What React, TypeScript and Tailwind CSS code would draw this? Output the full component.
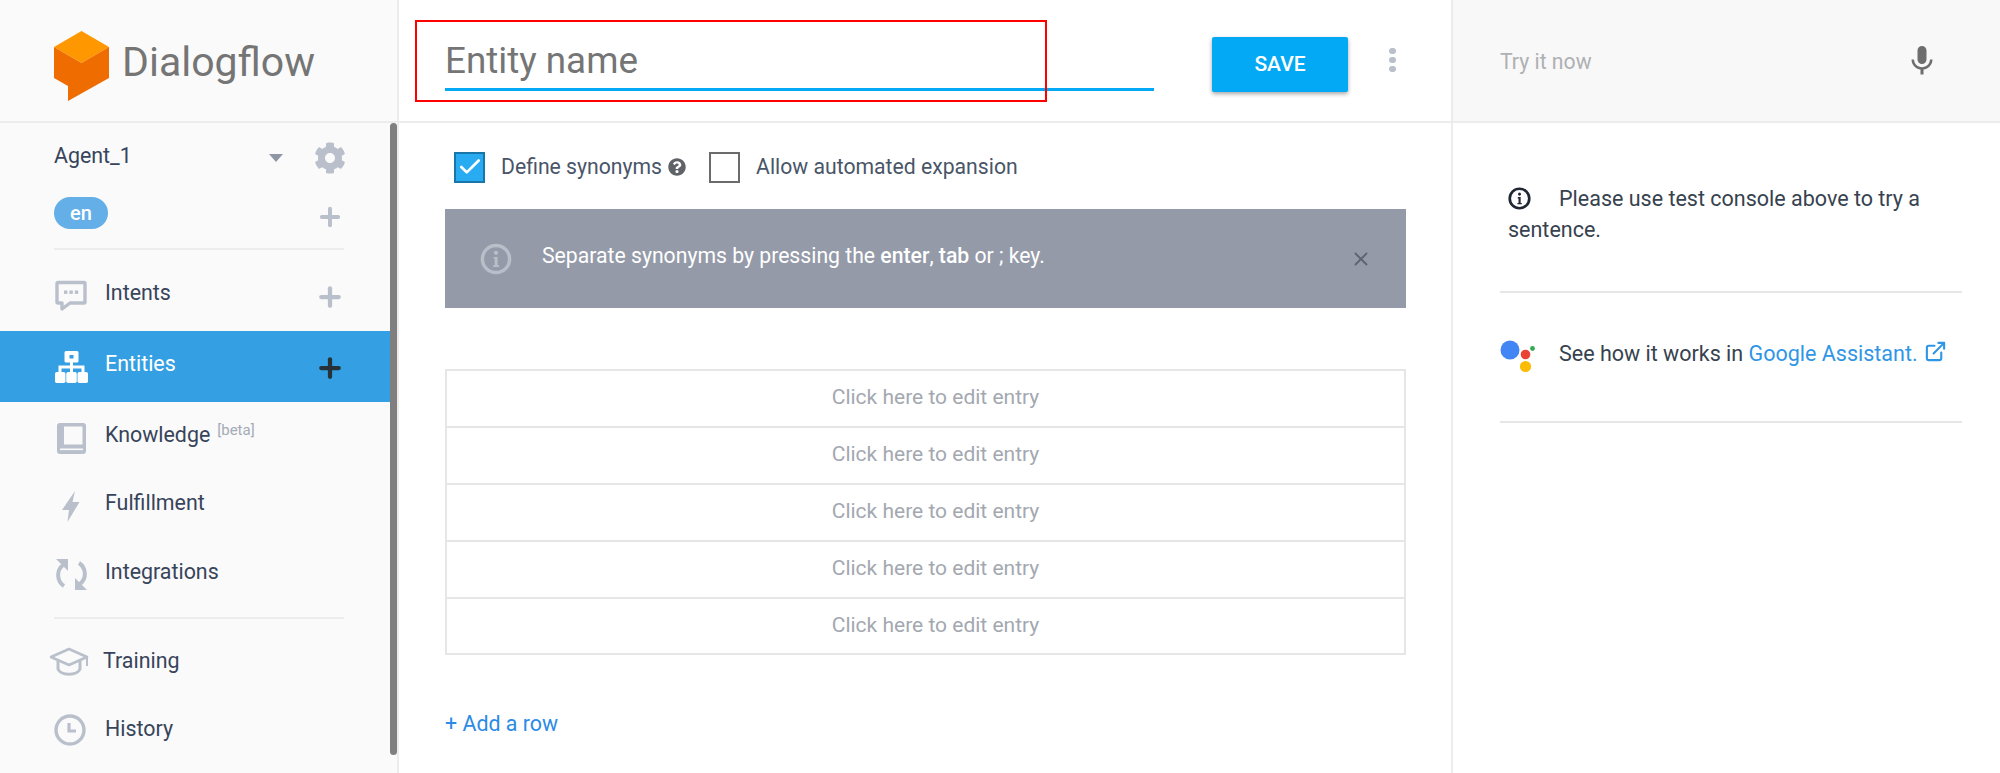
import React from 'react';
import { FaCog, FaQuestionCircle } from 'react-icons/fa';
import { MdMic } from 'react-icons/md';
import { Check, X, Plus, ExternalLink } from 'lucide-react';

const Logo = () => (
  <svg width="55" height="70" viewBox="0 0 55 70" className="shrink-0">
    <path d="M27.5 0 L55 16 L27.5 32 L0 16 Z" fill="#ff9800" />
    <path d="M0 16 L27.5 32 L55 16 V47 L14 70 V55 L0 47 Z" fill="#ef6c00" />
  </svg>
);

const IntentsIcon = () => (
  <svg width="32" height="32" viewBox="0 0 32 32">
    <path d="M3 2.5 H29 a1 1 0 0 1 1 1 V22 a1 1 0 0 1 -1 1 H15 L7 29 V23 H3 a1 1 0 0 1 -1 -1 V3.5 a1 1 0 0 1 1 -1 Z" fill="none" stroke="#b9c0cb" strokeWidth="3.4" strokeLinejoin="round" />
    <rect x="9" y="10.5" width="3.4" height="3.4" fill="#b9c0cb" />
    <rect x="14.4" y="10.5" width="3.4" height="3.4" fill="#b9c0cb" />
    <rect x="19.8" y="10.5" width="3.4" height="3.4" fill="#b9c0cb" />
  </svg>
);

const EntitiesIcon = () => (
  <svg width="33" height="32" viewBox="0 0 33 32">
    <path fillRule="evenodd" d="M11 0 H22 a1.5 1.5 0 0 1 1.5 1.5 V10 a1.5 1.5 0 0 1 -1.5 1.5 H11 a1.5 1.5 0 0 1 -1.5 -1.5 V1.5 A1.5 1.5 0 0 1 11 0 Z M14.5 4 V7.5 H18.5 V4 Z" fill="#fff" />
    <path d="M16.5 11 V22 M5 22 V16 H28 V22" fill="none" stroke="#fff" strokeWidth="3" />
    <rect x="0" y="21" width="10.5" height="11" rx="1.8" fill="#fff" />
    <rect x="11.25" y="21" width="10.5" height="11" rx="1.8" fill="#fff" />
    <rect x="22.5" y="21" width="10.5" height="11" rx="1.8" fill="#fff" />
  </svg>
);

const BookIcon = () => (
  <svg width="29" height="31" viewBox="0 0 29 31">
    <path d="M3 0 H26 a3 3 0 0 1 3 3 V28 a3 3 0 0 1 -3 3 H3 a3 3 0 0 1 -3 -3 V3 a3 3 0 0 1 3 -3 Z" fill="#b9c0cb" />
    <rect x="7" y="3.5" width="18.5" height="18" fill="#fafafa" />
    <rect x="3" y="25.5" width="23" height="1.6" fill="#fafafa" />
  </svg>
);

const BoltIcon = () => (
  <svg width="18" height="31" viewBox="0 0 18 31">
    <path d="M13 0 L0 19 H7 L5.5 31 L17.5 11 H10.5 Z" fill="#b9c0cb" />
  </svg>
);

const SyncIcon = () => (
  <svg width="33" height="33" viewBox="0 0 33 33">
    <path d="M8 7 A13 13 0 0 0 9 28" fill="none" stroke="#b9c0cb" strokeWidth="4" />
    <path d="M25 26 A13 13 0 0 0 24 5" fill="none" stroke="#b9c0cb" strokeWidth="4" />
    <path d="M1 1 H13 V13 Z" fill="#b9c0cb" />
    <path d="M32 32 H20 V20 Z" fill="#b9c0cb" />
  </svg>
);

const CapIcon = () => (
  <svg width="40" height="30" viewBox="0 0 40 30">
    <path d="M20 2 L38 10 L20 18 L2 10 Z" fill="none" stroke="#b9c0cb" strokeWidth="2.6" strokeLinejoin="round" />
    <path d="M9 14 V22 C12 29 28 29 31 22 V14" fill="none" stroke="#b9c0cb" strokeWidth="3" />
    <path d="M38 10 V19" fill="none" stroke="#b9c0cb" strokeWidth="2" />
  </svg>
);

const ClockIcon = () => (
  <svg width="32" height="32" viewBox="0 0 32 32">
    <circle cx="16" cy="16" r="14" fill="none" stroke="#b9c0cb" strokeWidth="3.4" />
    <path d="M15 9 V17 H22" fill="none" stroke="#b9c0cb" strokeWidth="3.2" />
  </svg>
);

const InfoIcon = ({ size, color, stroke }: { size: number; color: string; stroke: number }) => (
  <svg width={size} height={size} viewBox="0 0 24 24" className="shrink-0">
    <circle cx="12" cy="12" r="10.2" fill="none" stroke={color} strokeWidth={stroke} />
    <circle cx="12" cy="7.4" r="1.6" fill={color} />
    <path d="M10.2 10.5 H13.2 V16.6 H14.4 V18 H9.8 V16.6 H11 V11.9 H10.2 Z" fill={color} />
  </svg>
);

const AssistantIcon = () => (
  <svg width="36" height="34" viewBox="0 0 36 34" className="shrink-0">
    <circle cx="10" cy="10" r="9.5" fill="#4285f4" />
    <circle cx="25.5" cy="14.5" r="4.8" fill="#ea4335" />
    <circle cx="32.5" cy="8.5" r="2.4" fill="#34a853" />
    <circle cx="25.5" cy="26.5" r="5.6" fill="#fbbc05" />
  </svg>
);

const navTop = [
  { label: 'Intents', icon: <IntentsIcon />, h: 'h-[71px]', text: '-top-[2px]', plus: true },
  { label: 'Entities', icon: <EntitiesIcon />, h: 'h-[71px]', text: '-top-[2px]', plus: true, active: true },
  { label: 'Knowledge', icon: <BookIcon />, h: 'h-[68px] pt-[4px]', text: '-top-[3px]', beta: true },
  { label: 'Fulfillment', icon: <BoltIcon />, h: 'h-[72px]', text: '-top-[3px]' },
  { label: 'Integrations', icon: <SyncIcon />, h: 'h-[64px]', text: '-top-[2px]' },
];

const NavRow = ({ item }: { item: (typeof navTop)[number] }) => (
  <div className={`flex items-center ${item.h} pl-[54px] ${item.active ? 'bg-[#349fe2] text-white' : 'text-[#37445a]'}`}>
    <div className="w-[34px] flex justify-center shrink-0">{item.icon}</div>
    <span className={`ml-[17px] text-[21.4px] relative ${item.text}`}>{item.label}</span>
    {item.beta && <span className="ml-[7px] text-[15px] text-[#a4abb6] relative -top-[8px]">[beta]</span>}
    {item.plus && (
      <Plus size={30} strokeWidth={3.4} className={`ml-auto mr-[45px] relative top-[1px] ${item.active ? 'text-[#263238]' : 'text-[#b9c0cb]'}`} />
    )}
  </div>
);

export default function App() {
  return (
    <div className="flex h-[773px] w-[2000px] overflow-hidden bg-white font-['Roboto',sans-serif]">
      {/* Sidebar */}
      <aside className="w-[399px] shrink-0 flex flex-col bg-[#fafafa] border-r-2 border-[#ececec]">
        <div className="h-[123px] shrink-0 border-b-2 border-[#ececec] flex items-center pl-[54px] pt-[10px]">
          <Logo />
          <span className="ml-[13px] text-[41px] text-[#757575] relative -top-[3px]">Dialogflow</span>
        </div>
        <div className="flex flex-1 min-h-0">
          <div className="w-[390px] shrink-0">
            <div className="flex items-center h-[64px] pl-[54px] pt-[6px]">
              <span className="text-[21.4px] text-[#37445a] relative -top-[2px]">Agent_1</span>
              <span className="ml-auto mr-[31px] w-0 h-0 border-x-[7px] border-t-[8px] border-x-transparent border-t-[#8e95a5]" />
              <FaCog size={32} color="#b9c0cb" className="mr-[44px]" />
            </div>
            <div className="flex items-center h-[51px] pl-[54px]">
              <span className="w-[54px] h-[32px] rounded-full bg-[#64afe8] text-white text-[20px] font-medium flex items-center justify-center">en</span>
              <Plus size={28} strokeWidth={3.4} className="ml-auto mr-[46px] mt-[8px] text-[#b9c0cb]" />
            </div>
            <div className="h-[2px] bg-[#ececec] ml-[54px] w-[290px] mt-[10px]" />
            <div className="pt-[10px]">
              <NavRow item={navTop[0]} />
            </div>
            <NavRow item={navTop[1]} />
            <NavRow item={navTop[2]} />
            <NavRow item={navTop[3]} />
            <NavRow item={navTop[4]} />
            <div className="h-[2px] bg-[#ececec] ml-[54px] w-[290px] mt-[11px]" />
            <div className="flex items-center h-[64px] mt-[11px] pl-[49px] text-[#37445a]">
              <CapIcon />
              <span className="ml-[14px] text-[21.4px] relative -top-[1px]">Training</span>
            </div>
            <div className="flex items-center h-[64px] mt-[4px] pl-[54px] text-[#37445a]">
              <ClockIcon />
              <span className="ml-[19px] text-[21.4px] relative -top-[1px]">History</span>
            </div>
          </div>
          <div className="w-[8px] h-[632px] rounded-[4px] bg-[#7f7f7f]" />
        </div>
      </aside>

      {/* Main */}
      <main className="w-[1054px] shrink-0 border-r-2 border-[#ececec] flex flex-col">
        <div className="relative h-[123px] shrink-0 border-b-2 border-[#ececec] flex items-center pl-[46px]">
          <div className="w-[709px] h-[61px] border-b-[3px] border-[#03a9f4] flex items-center">
            <span className="text-[36.8px] text-[#757575] relative top-[2px]">Entity name</span>
          </div>
          <button className="ml-[58px] w-[136px] h-[55px] rounded-[2px] bg-[#03a9f4] text-white text-[21px] font-medium shadow-[0_2px_4px_rgba(0,0,0,0.35)] relative top-[4px]">SAVE</button>
          <div className="ml-[41px] flex flex-col gap-[3px] relative -top-[1px]">
            <span className="w-[7px] h-[6px] rounded-full bg-[#b9c0cb]" />
            <span className="w-[7px] h-[6px] rounded-full bg-[#b9c0cb]" />
            <span className="w-[7px] h-[6px] rounded-full bg-[#b9c0cb]" />
          </div>
          <div className="absolute left-[16px] top-[20px] w-[632px] h-[82px] border-2 border-[#ff0000]" />
        </div>

        <div className="pl-[46px] pr-[45px]">
          <div className="flex items-center h-[86px] pt-[2px] pl-[9px] text-[21.2px] text-[#4a5568]">
            <span className="w-[31px] h-[31px] bg-[#29abf2] border-2 border-[#1976a8] flex items-center justify-center">
              <Check size={26} strokeWidth={2.5} className="text-white" />
            </span>
            <span className="ml-[16px]">Define synonyms</span>
            <FaQuestionCircle size={18} color="#5f6368" className="ml-[6px]" />
            <span className="ml-[23px] w-[31px] h-[31px] bg-white border-2 border-[#6b6b6b]" />
            <span className="ml-[16px]">Allow automated expansion</span>
          </div>
          <div className="h-[99px] bg-[#949aa8] flex items-center pl-[35px] pr-[34px] text-white text-[21.2px]">
            <InfoIcon size={32} color="#b9bec8" stroke={2.6} />
            <span className="ml-[30px] relative -top-[3px]">
              Separate synonyms by pressing the <span className="font-medium">enter</span>, <span className="font-medium">tab</span> or ; key.
            </span>
            <X size={22} strokeWidth={2} className="ml-auto text-[#5d6470]" />
          </div>
          <div className="mt-[61px] border-2 border-[#e6e6e6] border-b-0">
            {[0, 1, 2, 3, 4].map((i) => (
              <div key={i} className="h-[56.9px] border-b-2 border-[#e6e6e6] flex items-center justify-center pl-[20px] pb-[1px] text-[21px] text-[#a3a8b0]">
                Click here to edit entry
              </div>
            ))}
          </div>
          <div className="mt-[53px] text-[21.4px] text-[#2b8be6]">+ Add a row</div>
        </div>
      </main>

      {/* Test console */}
      <section className="flex-1 min-w-0 flex flex-col">
        <div className="h-[123px] shrink-0 bg-[#f8f8f8] border-b-2 border-[#ececec] flex items-center pl-[47px] pr-[60px]">
          <span className="text-[21.2px] text-[#aeb0b3] relative top-[1px]">Try it now</span>
          <MdMic size={36} color="#6e6e6e" className="ml-auto" />
        </div>
        <div className="pl-[47px] pr-[38px]">
          <div className="h-[170px] border-b-2 border-[#e6e6e6] pt-[60px] pl-[8px] text-[21.5px] leading-[31px] text-[#37424f]">
            <span className="inline-block w-[51px] align-[-4px]">
              <InfoIcon size={23} color="#1f2733" stroke={2.8} />
            </span>
            Please use test console above to try a sentence.
          </div>
          <div className="h-[130px] border-b-2 border-[#e6e6e6] flex items-center text-[21.5px] text-[#37424f]">
            <AssistantIcon />
            <span className="ml-[23px] relative -top-[3px]">
              See how it works in <span className="text-[#2f96e6]">Google Assistant.</span>
            </span>
            <ExternalLink size={23} strokeWidth={2.2} className="ml-[6px] relative -top-[6px] text-[#2f96e6]" />
          </div>
        </div>
      </section>
    </div>
  );
}
